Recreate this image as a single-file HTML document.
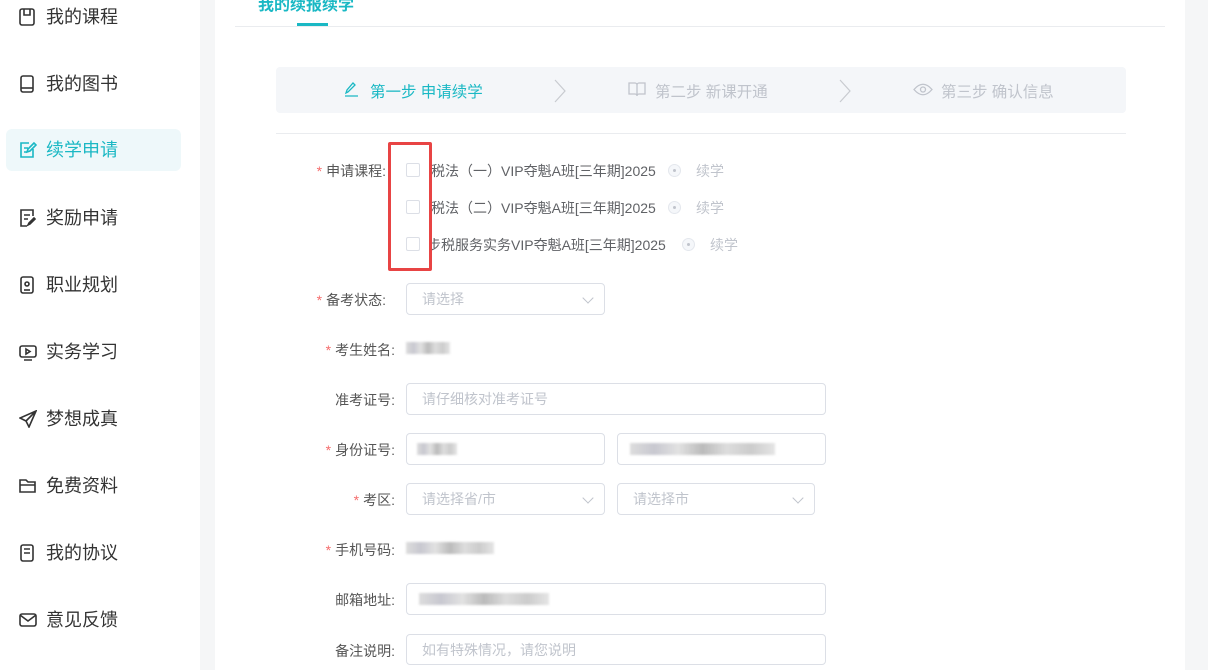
<!DOCTYPE html>
<html><head><meta charset="utf-8"><style>
*{margin:0;padding:0;box-sizing:border-box}
body{width:1208px;height:670px;overflow:hidden;background:#f5f6f7;font-family:"Liberation Sans","Noto Sans CJK SC",sans-serif;position:relative}
.side{position:absolute;left:0;top:0;width:200px;height:670px;background:#fff}
.item{position:absolute;left:6px;width:175px;height:42px;border-radius:6px;font-size:18px;color:#333;line-height:42px;padding-left:40px}
.item.act{background:#eef8fa;color:#1ab8c4}
.item svg{position:absolute;left:13px;top:12px}
.main{position:absolute;left:215px;top:0;width:970px;height:670px;background:#fff}
.abs{position:absolute}
.lbl{position:absolute;right:813px;font-size:14px;color:#555;text-align:right;white-space:nowrap}
.lbl b{color:#f56c6c;font-weight:normal;margin-right:4px}
.inp{position:absolute;border:1px solid #dcdfe6;border-radius:4px;height:32px;font-size:14px;color:#c0c4cc;line-height:30px;padding-left:15px;background:#fff}
.arr{position:absolute;right:12px;top:10px;width:8px;height:8px;border-right:1px solid #c0c4cc;border-bottom:1px solid #c0c4cc;transform:rotate(45deg)}
.blur{position:absolute;height:12px;background:linear-gradient(90deg,#ddd,#c8c8d0,#e2e2e2,#bbb,#ddd,#ccc,#e5e5e5);filter:blur(1px)}
.cb{position:absolute;left:406px;width:14px;height:14px;border:1px solid #dcdfe6;border-radius:2px;background:#fff;z-index:3}
.cover{position:absolute;left:396px;width:35px;height:22px;background:#fff;z-index:2}
.ct{position:absolute;font-size:14px;color:#606266;white-space:nowrap}
.rd{position:absolute;width:13px;height:13px;border-radius:50%;border:1px solid #e4e7ed;background:#f5f7fa}
.rd:after{content:"";position:absolute;left:4px;top:4px;width:3px;height:3px;border-radius:50%;background:#c0c4cc}
.rt{position:absolute;font-size:14px;color:#c0c4cc}
</style></head><body>
<div class="side">
<div class="item" style="top:-4px"><svg width="16" height="18" viewBox="0 0 16 18" fill="none" stroke="#333" stroke-width="1.6"><rect x="1" y="1" width="14" height="16" rx="2"/><path d="M5 1v6h6V1"/></svg>我的课程</div>
<div class="item" style="top:63px"><svg width="16" height="18" viewBox="0 0 16 18" fill="none" stroke="#333" stroke-width="1.6"><rect x="2" y="1" width="12" height="16" rx="2"/><path d="M2 13h12"/></svg>我的图书</div>
<div class="item act" style="top:129px"><svg width="18" height="18" viewBox="0 0 18 18" fill="none" stroke="#1ab8c4" stroke-width="1.6"><path d="M14 8v8H2V2h8M5 7h4M5 11h3M15 2l-6 6-1 3 3-1 6-6z"/></svg>续学申请</div>
<div class="item" style="top:197px"><svg width="18" height="18" viewBox="0 0 18 18" fill="none" stroke="#333" stroke-width="1.6"><path d="M14 7V1H2v16h6M5 6h6M5 10h4M16 10l-5 5-2 1 1-2 5-5z"/></svg>奖励申请</div>
<div class="item" style="top:264px"><svg width="16" height="18" viewBox="0 0 16 18" fill="none" stroke="#333" stroke-width="1.6"><rect x="2" y="1" width="12" height="16" rx="2"/><circle cx="8" cy="8" r="2"/><path d="M5 14h6"/></svg>职业规划</div>
<div class="item" style="top:331px"><svg width="18" height="18" viewBox="0 0 18 18" fill="none" stroke="#333" stroke-width="1.6"><rect x="1" y="3" width="16" height="11" rx="2"/><path d="M7 6l4 2.5L7 11zM5 17h8"/></svg>实务学习</div>
<div class="item" style="top:398px"><svg width="18" height="18" viewBox="0 0 18 18" fill="none" stroke="#333" stroke-width="1.6"><path d="M17 1L1 8l6 3 3 6zM7 11l10-10"/></svg>梦想成真</div>
<div class="item" style="top:465px"><svg width="18" height="18" viewBox="0 0 18 18" fill="none" stroke="#333" stroke-width="1.6"><path d="M1 3h6l2 2h7v10H1zM1 8h15"/></svg>免费资料</div>
<div class="item" style="top:532px"><svg width="16" height="18" viewBox="0 0 16 18" fill="none" stroke="#333" stroke-width="1.6"><rect x="2" y="1" width="12" height="16" rx="2"/><path d="M5 5h6M5 9h6"/></svg>我的协议</div>
<div class="item" style="top:599px"><svg width="18" height="18" viewBox="0 0 18 18" fill="none" stroke="#333" stroke-width="1.6"><rect x="1" y="3" width="16" height="12" rx="2"/><path d="M1 4l8 6 8-6"/></svg>意见反馈</div>
</div>
<div class="main"></div>
<div class="abs" style="left:258px;top:-9px;font-size:16px;font-weight:bold;color:#1ab8c4">我的续报续学</div>
<div class="abs" style="left:297px;top:23px;width:31px;height:3px;background:#1ab8c4"></div>
<div class="abs" style="left:235px;top:26px;width:930px;height:1px;background:#eaecef"></div>
<div class="abs" style="left:276px;top:67px;width:850px;height:46px;background:#f4f6f9;border-radius:4px"></div>
<svg class="abs" style="left:343px;top:81px" width="17" height="17" viewBox="0 0 17 17" fill="none" stroke="#1ab8c4" stroke-width="1.3"><path d="M3 12l1-3 6-7 2 2-7 7zM2 15h13"/></svg>
<div class="abs" style="left:370px;top:80px;font-size:15.5px;color:#1ab8c4">第一步 申请续学</div>
<svg class="abs" style="left:553px;top:79px" width="14" height="24" fill="none" stroke="#c8cbd0" stroke-width="1.2"><path d="M2 1l10 11L2 23"/></svg>
<svg class="abs" style="left:628px;top:82px" width="18" height="15" fill="none" stroke="#c0c4cc" stroke-width="1.3"><path d="M1 1h6a2 2 0 012 2v11a2 2 0 00-2-2H1zM17 1h-6a2 2 0 00-2 2v11a2 2 0 012-2h6z"/></svg>
<div class="abs" style="left:655px;top:80px;font-size:15.5px;color:#c0c4cc">第二步 新课开通</div>
<svg class="abs" style="left:838px;top:79px" width="14" height="24" fill="none" stroke="#c8cbd0" stroke-width="1.2"><path d="M2 1l10 11L2 23"/></svg>
<svg class="abs" style="left:913px;top:83px" width="20" height="13" fill="none" stroke="#c0c4cc" stroke-width="1.3"><path d="M1 6.5Q10-4 19 6.5Q10 17 1 6.5z"/><circle cx="10" cy="6.5" r="2.5"/></svg>
<div class="abs" style="left:941px;top:80px;font-size:15.5px;color:#c0c4cc">第三步 确认信息</div>
<div class="abs" style="left:276px;top:133px;width:850px;height:1px;background:#eaecef"></div>

<div class="lbl" style="top:161px;right:822px"><b>*</b>申请课程:</div>
<div class="cover" style="top:159px"></div><div class="cover" style="top:196px"></div><div class="cover" style="top:233px"></div>
<div class="cb" style="top:163px"></div><div class="ct" style="left:431px;top:161px">税法（一）VIP夺魁A班[三年期]2025</div><div class="rd" style="left:668px;top:164px"></div><div class="rt" style="left:696px;top:161px">续学</div>
<div class="cb" style="top:200px"></div><div class="ct" style="left:431px;top:198px">税法（二）VIP夺魁A班[三年期]2025</div><div class="rd" style="left:668px;top:201px"></div><div class="rt" style="left:696px;top:198px">续学</div>
<div class="cb" style="top:237px"></div><div class="ct" style="left:427px;top:235px">步税服务实务VIP夺魁A班[三年期]2025</div><div class="rd" style="left:682px;top:238px"></div><div class="rt" style="left:710px;top:235px">续学</div>
<div class="abs" style="left:388px;top:142px;width:44px;height:129px;border:3px solid #e84444;border-radius:2px;z-index:4"></div>

<div class="lbl" style="top:290px;right:822px"><b>*</b>备考状态:</div>
<div class="inp" style="left:406px;top:283px;width:199px">请选择<i class="arr"></i></div>
<div class="lbl" style="top:340px"><b>*</b>考生姓名:</div>
<div class="blur" style="left:406px;top:342px;width:44px"></div>
<div class="lbl" style="top:390px">准考证号:</div>
<div class="inp" style="left:406px;top:383px;width:420px">请仔细核对准考证号</div>
<div class="lbl" style="top:440px"><b>*</b>身份证号:</div>
<div class="inp" style="left:406px;top:433px;width:199px"><div class="blur" style="left:10px;top:9px;width:40px"></div></div>
<div class="inp" style="left:617px;top:433px;width:209px"><div class="blur" style="left:12px;top:9px;width:145px"></div></div>
<div class="lbl" style="top:490px"><b>*</b>考区:</div>
<div class="inp" style="left:406px;top:483px;width:199px">请选择省/市<i class="arr"></i></div>
<div class="inp" style="left:617px;top:483px;width:198px">请选择市<i class="arr"></i></div>
<div class="lbl" style="top:540px"><b>*</b>手机号码:</div>
<div class="blur" style="left:406px;top:542px;width:88px"></div>
<div class="lbl" style="top:590px">邮箱地址:</div>
<div class="inp" style="left:406px;top:583px;width:420px"><div class="blur" style="left:12px;top:9px;width:130px"></div></div>
<div class="lbl" style="top:641px">备注说明:</div>
<div class="inp" style="left:406px;top:634px;width:420px;height:31px">如有特殊情况，请您说明</div>
</body></html>
